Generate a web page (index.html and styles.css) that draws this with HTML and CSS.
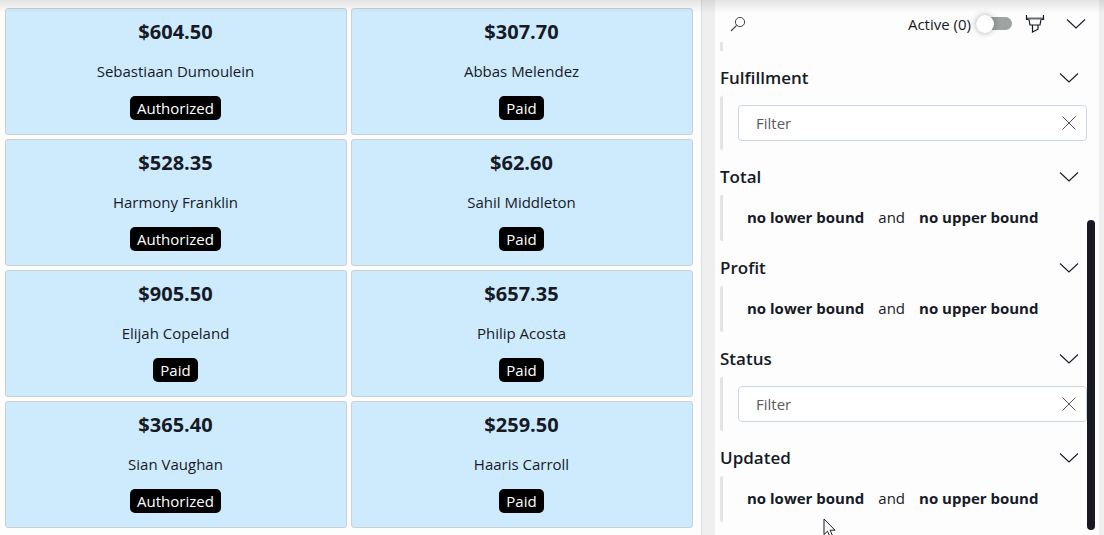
FILE: index.html
```html
<!DOCTYPE html>
<html lang="en">
<head>
<meta charset="utf-8">
<title>Orders</title>
<meta name="viewport" content="width=device-width, initial-scale=1">
<link rel="stylesheet" href="styles.css">
</head>
<body>
<svg class="defs" aria-hidden="true">
  <symbol id="chevron" viewBox="0 0 20 12"><path d="M1 1.500 10 10 19 1.500" fill="none" stroke="currentColor" stroke-width="1.1"/></symbol>
  <symbol id="cross" viewBox="0 0 14 14"><path d="M.5.5 13.5 13.5M13.5.5.5 13.5" fill="none" stroke="currentColor" stroke-width="1"/></symbol>
</svg>
<div class="app">
  <main class="orders">
    <article class="card"><h2 class="amount">$604.50</h2><p class="name">Sebastiaan Dumoulein</p><span class="badge">Authorized</span></article>
    <article class="card"><h2 class="amount">$307.70</h2><p class="name">Abbas Melendez</p><span class="badge">Paid</span></article>
    <article class="card"><h2 class="amount">$528.35</h2><p class="name">Harmony Franklin</p><span class="badge">Authorized</span></article>
    <article class="card"><h2 class="amount">$62.60</h2><p class="name">Sahil Middleton</p><span class="badge">Paid</span></article>
    <article class="card"><h2 class="amount">$905.50</h2><p class="name">Elijah Copeland</p><span class="badge">Paid</span></article>
    <article class="card"><h2 class="amount">$657.35</h2><p class="name">Philip Acosta</p><span class="badge">Paid</span></article>
    <article class="card"><h2 class="amount">$365.40</h2><p class="name">Sian Vaughan</p><span class="badge">Authorized</span></article>
    <article class="card"><h2 class="amount">$259.50</h2><p class="name">Haaris Carroll</p><span class="badge">Paid</span></article>
  </main>
  <div class="divider"></div>
  <aside class="filters">
    <header class="toolbar">
      <button class="icon-button search" aria-label="Search"><svg width="16" height="16" viewBox="0 0 16 16"><circle cx="10" cy="6" r="4.6" fill="none" stroke="currentColor" stroke-width="1"/><path d="M6.6 9.400 1 15" stroke="currentColor" stroke-width="1.2"/></svg></button>
      <label class="active-label" for="active">Active (0)</label>
      <input class="toggle" id="active" type="checkbox" role="switch">
      <button class="icon-button brush" aria-label="Clear filters"><svg width="20" height="20" viewBox="0 0 20 20"><path d="M2 3.500h16v2H2z" fill="#6a6a76"/><path d="M1.500 1v4.500h2M18.500 1v4.500h-2M4 5.500l1 5.500h10l1-5.500M7.500 11v7l5.500-2.800V11" fill="none" stroke="currentColor" stroke-width="1.2"/></svg></button>
      <button class="icon-button" aria-label="Collapse all"><svg width="20" height="12"><use href="#chevron"/></svg></button>
    </header>
    <div class="rule-end"></div>
    <section>
      <h3 class="heading">Fulfillment<button class="icon-button" aria-label="Collapse Fulfillment"><svg width="20" height="12"><use href="#chevron"/></svg></button></h3>
      <div class="body">
        <div class="field"><input class="field-input" type="text" placeholder="Filter" aria-label="Filter Fulfillment"><button class="icon-button clear" aria-label="Clear Fulfillment"><svg width="14" height="14"><use href="#cross"/></svg></button></div>
      </div>
    </section>
    <section>
      <h3 class="heading">Total<button class="icon-button" aria-label="Collapse Total"><svg width="20" height="12"><use href="#chevron"/></svg></button></h3>
      <div class="body range"><button class="bound">no lower bound</button><span>and</span><button class="bound">no upper bound</button></div>
    </section>
    <section>
      <h3 class="heading">Profit<button class="icon-button" aria-label="Collapse Profit"><svg width="20" height="12"><use href="#chevron"/></svg></button></h3>
      <div class="body range"><button class="bound">no lower bound</button><span>and</span><button class="bound">no upper bound</button></div>
    </section>
    <section>
      <h3 class="heading">Status<button class="icon-button" aria-label="Collapse Status"><svg width="20" height="12"><use href="#chevron"/></svg></button></h3>
      <div class="body">
        <div class="field"><input class="field-input" type="text" placeholder="Filter" aria-label="Filter Status"><button class="icon-button clear" aria-label="Clear Status"><svg width="14" height="14"><use href="#cross"/></svg></button></div>
      </div>
    </section>
    <section>
      <h3 class="heading">Updated<button class="icon-button" aria-label="Collapse Updated"><svg width="20" height="12"><use href="#chevron"/></svg></button></h3>
      <div class="body range"><button class="bound">no lower bound</button><span>and</span><button class="bound">no upper bound</button></div>
    </section>
    <div class="scroll-thumb"></div>
    <svg class="pointer" width="13" height="20" viewBox="0 0 13 20"><path d="M1 1v15.500l3.500-3.300 2.500 5.800 2.600-1.100-2.500-5.700h4.900z" fill="#fff" stroke="#1b1b2b"/></svg>
  </aside>
</div>
<div class="top-shadow"></div>
</body>
</html>
```
FILE: styles.css
```css
* { box-sizing: border-box; }

body {
  margin: 0;
  overflow: hidden;
  background: #efefef;
  color: #161a26;
  font-family: "Open Sans", "Noto Sans", sans-serif;
  font-size: 15px;
  line-height: 24px;
}

h2, h3, p { margin: 0; }
svg { display: block; }
.defs { position: absolute; width: 0; height: 0; }

button {
  padding: 0;
  border: 0;
  background: none;
  color: inherit;
  font: inherit;
}

.app {
  display: grid;
  grid-template-columns: 1fr 14px 384px;
  min-height: 100vh;
  padding-right: 5px;
}

.orders {
  display: grid;
  grid-template-columns: 1fr 1fr;
  align-content: start;
  gap: 4px;
  padding: 8px 8px 7px 5px;
  background: #fdfdfd;
}

.card {
  display: flex;
  flex-direction: column;
  align-items: center;
  padding: 9px 9px 14px 8px;
  border: 1px solid #cbd0d4;
  border-radius: 3px;
  background: #ceebfd;
}

.amount { font-size: 20px; font-weight: 700; line-height: 28px; }
.name { margin: 13px 0; }

.badge {
  padding: 0 7px;
  border-radius: 5px;
  background: #000;
  color: #fff;
}

.divider { border-left: 1px solid #dedede; }

.filters {
  position: relative;
  background: #fdfdfd;
  padding-left: 5px;
}

.icon-button { flex: none; }

.toolbar {
  display: flex;
  align-items: center;
  height: 42px;
  padding: 5px 13px 0 10px;
}

.search { color: #444; }
.active-label { margin-left: auto; }

.toggle {
  appearance: none;
  display: flex;
  align-items: center;
  width: 36px;
  height: 13px;
  margin: 0 13px 0 5px;
  border-radius: 7px;
  background: #9ca3a1;
}

.toggle::before {
  content: "";
  width: 18px;
  height: 18px;
  border-radius: 50%;
  background: #fff;
  box-shadow: 0 0 6px #0005;
}

.brush { margin-right: 21px; }

.rule-end { width: 3px; height: 9px; background: #e4e4e4; }

.heading {
  display: flex;
  align-items: center;
  justify-content: space-between;
  padding: 13px 20px 4px 0;
  font-size: 17px;
  font-weight: 600;
  line-height: 28px;
}

.body {
  padding: 9px 12px 9px 15px;
  border-left: 3px solid #e4e4e4;
  border-radius: 2px;
}

.field {
  display: flex;
  align-items: center;
  height: 36px;
  padding: 0 10px 0 17px;
  border: 1px solid #ccd7e4;
  border-radius: 4px;
  background: #fff;
}

.field-input {
  flex: 1;
  min-width: 0;
  padding: 0;
  border: 0;
  outline: 0;
  background: none;
  color: inherit;
  font: inherit;
}

.field-input::placeholder { color: #5c5c5c; opacity: 1; }
.clear { color: #555; }

.range {
  display: flex;
  gap: 14px;
  padding: 10px 12px 12px 24px;
}

.bound { font-weight: 700; }

.scroll-thumb {
  position: absolute;
  top: 220px;
  right: 4px;
  bottom: 5px;
  width: 8px;
  border-radius: 4px;
  background: #151a22;
}

.pointer { position: absolute; top: 518px; left: 108px; }

.top-shadow {
  position: absolute;
  top: 0;
  left: 0;
  right: 0;
  height: 13px;
  background: linear-gradient(#0000001a, #0000);
  pointer-events: none;
}
```
